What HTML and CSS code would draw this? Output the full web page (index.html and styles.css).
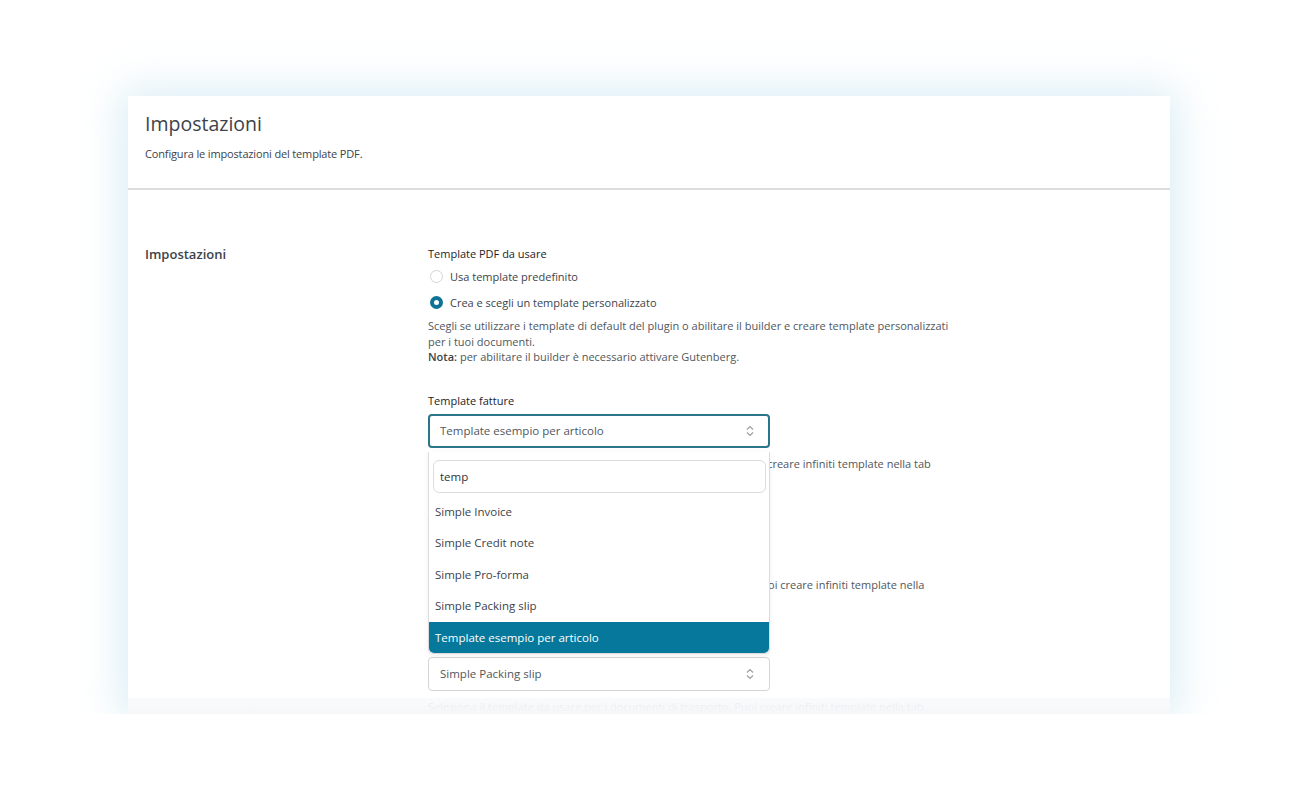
FILE: index.html
```html
<!DOCTYPE html>
<html lang="it">
<head>
  <meta charset="UTF-8">
  <title>Impostazioni</title>
  <link rel="stylesheet" href="styles.css">
</head>
<body>

  <div class="settings-card">
    <div class="card-header">
      <h1>Impostazioni</h1>
      <p>Configura le impostazioni del template PDF.</p>
    </div>

    <div class="settings-row">
      <h2 class="row-title">Impostazioni</h2>

      <div class="row-fields">
        <div class="field">
          <div class="field-label">Template PDF da usare</div>
          <label class="radio-line">
            <span class="radio"></span>Usa template predefinito
          </label>
          <label class="radio-line">
            <span class="radio checked"></span>Crea e scegli un template personalizzato
          </label>
          <p class="field-desc">
            Scegli se utilizzare i template di default del plugin o abilitare il builder e creare template personalizzati<br>
            per i tuoi documenti.<br>
            <strong>Nota:</strong> per abilitare il builder è necessario attivare Gutenberg.
          </p>
        </div>

        <div class="field select-field">
          <div class="field-label">Template fatture</div>
          <div class="select-wrap">
            <div class="select-box focused">
              <span>Template esempio per articolo</span>
              <svg class="select-arrows" width="8" height="12" viewBox="0 0 8 12"><path d="M1 4.5 4 1.5 7 4.5M1 7.5 4 10.5 7 7.5" fill="none" stroke="#9a9ea3" stroke-width="1.2"/></svg>
            </div>

            <div class="dropdown">
              <div class="dropdown-search">temp</div>
              <ul class="dropdown-list">
                <li>Simple Invoice</li>
                <li>Simple Credit note</li>
                <li>Simple Pro-forma</li>
                <li>Simple Packing slip</li>
                <li class="active">Template esempio per articolo</li>
              </ul>
            </div>
          </div>
          <p class="field-desc">
            Seleziona il template PDF da usare per le fatture del negozio. Puoi creare infiniti template nella tab<br>
            Template PDF del plugin.
          </p>
        </div>

        <div class="field select-field">
          <div class="field-label">Template note di credito</div>
          <div class="select-box">
            <span>Simple Credit note</span>
            <svg class="select-arrows" width="8" height="12" viewBox="0 0 8 12"><path d="M1 4.5 4 1.5 7 4.5M1 7.5 4 10.5 7 7.5" fill="none" stroke="#9a9ea3" stroke-width="1.2"/></svg>
          </div>
          <p class="field-desc">
            Seleziona il template PDF da usare per le note di credito create. Puoi creare infiniti template nella<br>
            tab Template PDF del plugin.
          </p>
        </div>

        <div class="field select-field">
          <div class="field-label">Template documenti di trasporto</div>
          <div class="select-box">
            <span>Simple Packing slip</span>
            <svg class="select-arrows" width="8" height="12" viewBox="0 0 8 12"><path d="M1 4.5 4 1.5 7 4.5M1 7.5 4 10.5 7 7.5" fill="none" stroke="#9a9ea3" stroke-width="1.2"/></svg>
          </div>
          <p class="field-desc">
            Seleziona il template da usare per i documenti di trasporto. Puoi creare infiniti template nella tab<br>
            Template PDF del plugin.
          </p>
        </div>
      </div>
    </div>
  </div>

</body>
</html>
```

FILE: styles.css
```css
body {
  margin: 0;
  padding-top: 96px;
  background: #fff;
  font-family: "Open Sans", Arial, sans-serif;
  color: #3c434a;
}

.settings-card {
  position: relative;
  width: 1042px;
  height: 618px;
  margin-left: 128px;
  background: #fff;
  overflow: hidden;
  box-shadow: 0 0 40px 6px rgba(170, 214, 232, 0.45);
}

.settings-card::after {
  content: "";
  position: absolute;
  left: 0;
  right: 0;
  bottom: 0;
  height: 16px;
  background: linear-gradient(rgba(249, 250, 251, 0.88), #f5f7f8);
}

.card-header {
  height: 94px;
  padding: 0 17px;
  border-bottom: 2px solid #dcdcde;
  box-sizing: border-box;
}

.card-header h1 {
  margin: 0;
  padding-top: 14px;
  font-size: 19.5px;
  font-weight: 400;
  line-height: 28px;
  color: #3c434a;
}

.card-header p {
  margin: 8px 0 0;
  font-size: 11px;
  line-height: 16px;
  letter-spacing: -0.15px;
  color: #3c434a;
}

.settings-row {
  display: flex;
  padding: 55px 17px 0;
}

.row-title {
  width: 283px;
  margin: 0;
  font-size: 13px;
  font-weight: 600;
  line-height: 18px;
  color: #3c434a;
}

.row-fields {
  flex: 1;
  font-size: 11px;
  color: #3c434a;
}

.field-label {
  line-height: 18px;
  color: #1d2327;
  font-weight: 500;
}

.radio-line {
  display: flex;
  align-items: center;
  height: 25px;
  margin-top: 1px;
}

.radio {
  width: 13px;
  height: 13px;
  margin: 0 7px 0 2px;
  border: 1px solid #d3d5d8;
  border-radius: 50%;
  box-sizing: border-box;
}

.radio.checked {
  border: 4px solid #0f7395;
}

.field-desc {
  margin: 3px 0 0;
  width: 560px;
  line-height: 15.5px;
  color: #50575e;
}

.field-desc strong {
  font-weight: 600;
  color: #3c434a;
}

.select-field {
  margin-top: 27px;
}

.select-field + .select-field {
  margin-top: 26.5px;
}

.select-field .field-label {
  margin-bottom: 4px;
}

.select-wrap {
  position: relative;
}

.select-box {
  display: flex;
  align-items: center;
  justify-content: space-between;
  width: 342px;
  height: 34px;
  padding: 0 11px;
  border: 1px solid #d3d5d8;
  border-radius: 4px;
  box-sizing: border-box;
  font-size: 11.5px;
  color: #50575e;
}

.select-box.focused {
  border: 2px solid #2a7589;
  padding: 0 10px;
}

.select-arrows {
  margin-right: 4px;
}

.select-field .field-desc {
  margin-top: 8px;
}

.dropdown {
  position: absolute;
  top: 38px;
  left: 0;
  width: 342px;
  background: #fff;
  border: 1px solid #dcdcde;
  border-top: none;
  border-radius: 0 0 5px 5px;
  box-sizing: border-box;
  box-shadow: 0 2px 6px rgba(0, 0, 0, 0.06);
  z-index: 2;
}

.dropdown-search {
  height: 31px;
  margin: 8px 3px 3px 4px;
  padding: 0 6px;
  border: 1px solid #dcdcde;
  border-radius: 6px;
  line-height: 31px;
  font-size: 11.5px;
  color: #2c3338;
}

.dropdown-list {
  margin: 0;
  padding: 0;
  list-style: none;
}

.dropdown-list li {
  height: 31.6px;
  padding: 0 6px;
  line-height: 31.6px;
  font-size: 11.5px;
  color: #3c434a;
}

.dropdown-list li.active {
  background: #06789c;
  color: #fff;
  border-radius: 0 0 5px 5px;
}
```
